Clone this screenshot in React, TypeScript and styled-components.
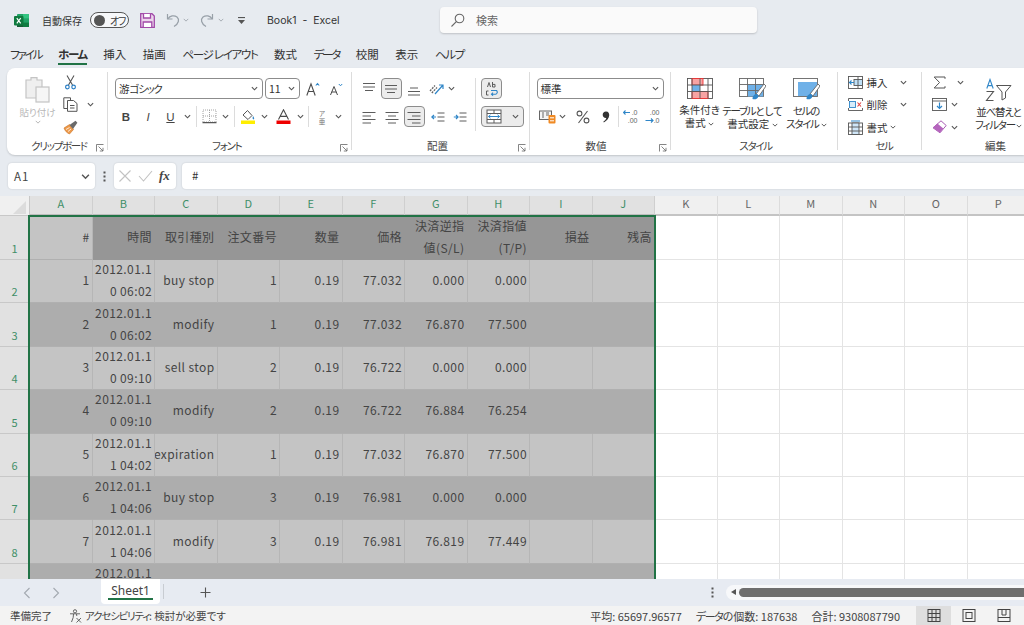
import React from 'react';
import styled, {createGlobalStyle} from 'styled-components';

const GREEN = '#217346';
const INK = '#444';

const GlobalStyle = createGlobalStyle`
	html, body {
		margin: 0;
		padding: 0;
		background: #e7ebf0;
	}
	* {
		box-sizing: border-box;
	}
	body {
		font-family: 'Noto Sans CJK JP', 'Noto Sans', sans-serif;
		color: #3a3a3a;
	}
`;

const COLUMNS = 'ABCDEFGHIJKLMNOP'.split('');
const SELECTED = 10;

const HEAD = ['#', '時間', '取引種別', '注文番号', '数量', '価格', '決済逆指\n値(S/L)', '決済指値\n(T/P)', '損益', '残高'];

const ROWS = [
	['1', '2012.01.1\n0 06:02', 'buy stop', '1', '0.19', '77.032', '0.000', '0.000'],
	['2', '2012.01.1\n0 06:02', 'modify', '1', '0.19', '77.032', '76.870', '77.500'],
	['3', '2012.01.1\n0 09:10', 'sell stop', '2', '0.19', '76.722', '0.000', '0.000'],
	['4', '2012.01.1\n0 09:10', 'modify', '2', '0.19', '76.722', '76.884', '76.254'],
	['5', '2012.01.1\n1 04:02', 'expiration', '1', '0.19', '77.032', '76.870', '77.500'],
	['6', '2012.01.1\n1 04:06', 'buy stop', '3', '0.19', '76.981', '0.000', '0.000'],
	['7', '2012.01.1\n1 04:06', 'modify', '3', '0.19', '76.981', '76.819', '77.449'],
	['', '2012.01.1\n\u00a0', '', '', '', '', '', ''],
];

const Chev = ({size = 7, color = '#555'}: {size?: number; color?: string}) => (
	<svg width={size} height={size} viewBox='0 0 8 8' fill='none' stroke={color} strokeWidth='1.3'>
		<path d='M1 2.5 L4 5.5 L7 2.5' />
	</svg>
);

const ExcelLogo = () => (
	<svg width='15' height='15' viewBox='0 0 15 15'>
		<rect x='3' y='1' width='12' height='13' rx='1' fill='#21a366' />
		<rect x='9' y='1' width='6' height='4.4' fill='#33c481' />
		<rect x='9' y='9.6' width='6' height='4.4' fill='#107c41' />
		<rect x='3' y='9.6' width='6' height='4.4' fill='#185c37' />
		<rect x='0' y='3' width='9.5' height='9.5' rx='1' fill='#0f7a3f' />
		<path d='M2.8 5.2 L6.7 10.3 M6.7 5.2 L2.8 10.3' stroke='#fff' strokeWidth='1.2' />
	</svg>
);

const SaveIcon = () => (
	<svg width='15' height='15' viewBox='0 0 15 15' fill='#ecd5ec' stroke='#a14aa8' strokeWidth='1.3'>
		<path d='M.7.7 H12 L14.3 3 V14.3 H.7 Z' />
		<path d='M3.5 .9 V5 H10.5 V.9' fill='#fff' />
		<path d='M3.2 14 V9 H11.8 V14' fill='#fff' />
	</svg>
);

const UndoIcon = ({flip}: {flip?: boolean}) => (
	<svg width='14' height='15' viewBox='0 0 14 15' fill='none' stroke='#98a0a8' strokeWidth='1.2' style={flip ? {transform: 'scaleX(-1)'} : undefined}>
		<path d='M1.5 1 V6 H6.5' />
		<path d='M1.8 5.8 C4 2.8 8 1.8 11 4 C13.6 6.3 13 10.6 8 13.5' />
	</svg>
);

const Customize = () => (
	<svg width='9' height='9' viewBox='0 0 9 9' fill='#555'>
		<rect x='1' y='1' width='7' height='1.1' />
		<path d='M1 4 H8 L4.5 8 Z' />
	</svg>
);

const SearchIcon = () => (
	<svg width='15' height='15' viewBox='0 0 15 15' fill='none' stroke='#666' strokeWidth='1.1'>
		<circle cx='9.5' cy='5.5' r='4.3' />
		<path d='M6.3 8.7 L1.5 13.5' />
	</svg>
);

const PasteIcon = () => (
	<svg width='25' height='27' viewBox='0 0 25 27' fill='#efefef' stroke='#c4c4c4' strokeWidth='1.2'>
		<path d='M1 4 H6 V1.6 H12 V4 H17 V22 H1 Z' />
		<rect x='11' y='11' width='13' height='15' fill='#f6f6f6' />
	</svg>
);

const ScissorsIcon = () => (
	<svg width='11' height='15' viewBox='0 0 11 15' fill='none'>
		<path d='M2 .5 L7.5 10 M9 .5 L3.5 10' stroke='#555' strokeWidth='1.1' />
		<circle cx='2.4' cy='12' r='1.8' stroke='#2c7fc4' strokeWidth='1.2' />
		<circle cx='8.6' cy='12' r='1.8' stroke='#2c7fc4' strokeWidth='1.2' />
	</svg>
);

const CopyIcon = () => (
	<svg width='15' height='15' viewBox='0 0 15 15' fill='#fff' stroke='#555' strokeWidth='1'>
		<path d='M.8 .8 H7.5 V11.5 H.8 Z' />
		<path d='M4.5 3.5 H10.5 L14 6.5 V14.3 H4.5 Z' />
		<path d='M7 8.5 H11.5 M7 11 H11.5' />
	</svg>
);

const BrushIcon = () => (
	<svg width='15' height='15' viewBox='0 0 15 15'>
		<path d='M1 8 L6.5 4.5 L10.5 9.5 L6.5 14 C4 13 2 11 1 8 Z' fill='#ed9a4b' stroke='#c96f1e' strokeWidth='.6' />
		<path d='M6.5 5 L12.5 .8 L14.4 2.8 L10 9' fill='#6a6a6a' />
		<path d='M3 9.5 L6.5 7.5 M5 11.5 L8 9' stroke='#fff' strokeWidth='.8' />
	</svg>
);

const Launcher = () => (
	<svg width='8' height='8' viewBox='0 0 8 8' fill='none' stroke='#666' strokeWidth='.8'>
		<path d='M.5 7.5 V.5 H7.5' />
		<path d='M2.5 2.5 L7 7 M7 3.8 V7 H3.8' />
	</svg>
);

const GrowFont = ({small}: {small?: boolean}) => (
	<svg width='14' height='14' viewBox='0 0 14 14' fill='none' stroke='#4a4a4a' strokeWidth={small ? 1 : 1.1}>
		<path d={small ? 'M1.5 13 L5 4.5 L8.5 13 M2.7 10 H7.3' : 'M.8 13.5 L5 1.8 L9.2 13.5 M2.2 9.5 H7.8'} />
		<path d={small ? 'M9.8 2 L11.5 3.8 L13.2 2' : 'M9.8 3.5 L11.5 1.5 L13.2 3.5'} stroke='#2f86c8' />
	</svg>
);

const BorderIcon = () => (
	<svg width='15' height='15' viewBox='0 0 15 15' fill='none' stroke='#9a9a9a' strokeWidth='.9' strokeDasharray='1 1'>
		<rect x='1' y='1' width='13' height='12' />
		<path d='M7.5 1 V13 M1 7 H14' />
		<path d='M.5 13.6 H14.5' stroke='#555' strokeDasharray='none' strokeWidth='1.1' />
	</svg>
);

const FillIcon = () => (
	<svg width='15' height='15' viewBox='0 0 15 15' fill='none'>
		<path d='M2 6 L6.5 1.5 L11 6.5 L7 10.5 Z' fill='#fff' stroke='#555' strokeWidth='1' />
		<path d='M12 7 C13.5 9 13.5 10.2 12.5 10.5 C11.3 10.2 11.5 8.6 12 7 Z' fill='#2f86c8' />
		<rect x='0' y='11.5' width='14' height='3.5' fill='#ffee00' />
	</svg>
);

const FontColorIcon = () => (
	<svg width='15' height='15' viewBox='0 0 15 15' fill='none'>
		<path d='M2.5 10.5 L7.5 .8 L12.5 10.5 M4.2 7.4 H10.8' stroke='#4a4a4a' strokeWidth='1.1' />
		<rect x='0.5' y='11.5' width='14' height='3.5' fill='#ee0000' />
	</svg>
);

const Lines = ({kind}: {kind: 'left' | 'center' | 'right' | 'top' | 'middle' | 'bottom'}) => {
	const paths = {
		left: 'M.5 2.5 H13.5 M.5 6 H9 M.5 9.5 H13.5 M.5 13 H9',
		center: 'M.5 2.5 H13.5 M3 6 H11 M.5 9.5 H13.5 M3 13 H11',
		right: 'M.5 2.5 H13.5 M5 6 H13.5 M.5 9.5 H13.5 M5 13 H13.5',
		top: 'M1 1.5 H13 M1 5 H13 M3 8.5 H11',
		middle: 'M1 3.5 H13 M1 7 H13 M3 10.5 H11',
		bottom: 'M3 6 H11 M1 9.5 H13 M1 13 H13',
	};
	return (
		<svg width='14' height='14' viewBox='0 0 14 14' fill='none' stroke='#5c5c5c' strokeWidth='1'>
			<path d={paths[kind]} />
		</svg>
	);
};

const IndentIcon = ({out}: {out?: boolean}) => (
	<svg width='14' height='14' viewBox='0 0 14 14' fill='none' stroke='#5c5c5c' strokeWidth='1'>
		<path d='M6.5 3 H13.5 M6.5 7 H13.5 M6.5 11 H13.5' />
		<path d={out ? 'M5 7 H.8 M3 5 L.8 7 L3 9' : 'M.8 7 H5 M3 5 L5 7 L3 9'} stroke='#2f86c8' strokeWidth='1.2' />
	</svg>
);

const OrientIcon = () => (
	<svg width='15' height='14' viewBox='0 0 15 14' fill='none'>
		<path d='M1 9 L6 3.5 M2.8 11 L8 5.5' stroke='#666' strokeWidth='1.3' strokeDasharray='2 1' />
		<path d='M6 12 L14 3 M10 3 H14 V7' stroke='#2f86c8' strokeWidth='1.2' />
	</svg>
);

const WrapIcon = () => (
	<svg width='14' height='15' viewBox='0 0 14 15' fill='none' stroke='#5c5c5c' strokeWidth='1'>
		<path d='M3.5 6 L5 1.5 L6.5 6 M8.5 1 V6 M8.5 3.4 H11 V6 H8.5' />
		<path d='M4.5 10 H2.5 V14 H4.5' />
		<path d='M7 9.5 H12.5 C14 11 13 13.2 11.5 13.2 H7.5 M9 11.7 L7.5 13.2 L9 14.7' stroke='#2f86c8' strokeWidth='1.1' />
	</svg>
);

const MergeIcon = () => (
	<svg width='16' height='15' viewBox='0 0 16 15' fill='none' stroke='#5c5c5c' strokeWidth='1'>
		<rect x='1' y='1' width='14' height='13' fill='#fff' />
		<path d='M1 4.5 H15 M1 10.5 H15 M8 1 V4.5 M8 10.5 V14' />
		<path d='M2.5 7.5 H13.5 M4.5 5.8 L2.5 7.5 L4.5 9.2 M11.5 5.8 L13.5 7.5 L11.5 9.2' stroke='#2f86c8' />
	</svg>
);

const AccountingIcon = () => (
	<svg width='17' height='14' viewBox='0 0 17 14' fill='none' stroke='#666' strokeWidth='1'>
		<rect x='.5' y='1' width='12' height='8.5' fill='#f4f4f4' />
		<path d='M3 3 H5 M3 5 H5 M3 7 H5 M7 3 H10 M7 5 H10' />
		<rect x='9.5' y='5' width='7' height='8.5' rx='1' fill='#f08a24' stroke='none' />
		<path d='M11 7.8 H15 M11 10.8 H15' stroke='#fff' />
	</svg>
);

const PercentIcon = () => (
	<svg width='14' height='14' viewBox='0 0 14 14' fill='none' stroke='#555' strokeWidth='1.1'>
		<circle cx='3.5' cy='3.5' r='2.4' />
		<circle cx='10.5' cy='10.5' r='2.4' />
		<path d='M11.5 1 L2.5 13' />
	</svg>
);

const CommaIcon = () => (
	<svg width='8' height='12' viewBox='0 0 8 12' fill='#333'>
		<path d='M4 .6 C6.5 .6 7.4 2.6 7.2 4.6 C7 7.4 4.8 10 1.8 11.4 L1.4 10.6 C3 9.6 4 8.4 4.3 7 C2 7.2 .7 5.6 .7 3.8 C.7 2 2 .6 4 .6 Z' />
	</svg>
);

const DecimalIcon = ({more}: {more?: boolean}) => (
	<svg width='15' height='15' viewBox='0 0 15 15' fill='none'>
		<g fill='#666' fontSize='7' fontFamily='Liberation Sans, sans-serif' textAnchor='end'>
			<text x='14.5' y='6'>{more ? '.00' : '.0'}</text>
			<text x='14.5' y='14'>{more ? '.0' : '.00'}</text>
		</g>
		<path d={more ? 'M.5 11.5 H8 M6 9.5 L8 11.5 L6 13.5' : 'M.5 3.5 H7 M2.5 1.5 L.5 3.5 L2.5 5.5'} stroke='#2f86c8' strokeWidth='1.1' />
	</svg>
);

const CondFormatIcon = () => (
	<svg width='26' height='21' viewBox='0 0 26 21' fill='#fff' stroke='#555' strokeWidth='.9'>
		<rect x='.5' y='.5' width='25' height='20' />
		<rect x='5' y='.5' width='11' height='6.6' fill='#f7a3a3' stroke='#e33' />
		<rect x='5' y='7' width='8' height='6.6' fill='#6fb1e8' stroke='none' />
		<rect x='5' y='13.5' width='16' height='7' fill='#f7a3a3' stroke='#e33' />
		<path d='M5 .5 V20.5 M13 .5 V20.5 M21 .5 V20.5 M.5 7 H25.5 M.5 13.5 H25.5' fill='none' />
	</svg>
);

const Paint = () => (
	<>
		<path d='M17 16 L25 6 L27 8 L20 18 Z' fill='#fff' stroke='#666' strokeWidth='.9' />
		<path d='M13.5 21 C13.5 18 15.5 15.5 18 16 C20 17 19.5 19.5 18 20.5 C16.5 21.5 15 21.5 13.5 21 Z' fill='#2f86c8' stroke='none' />
	</>
);

const TableFormatIcon = () => (
	<svg width='27' height='22' viewBox='0 0 27 22' fill='#fff' stroke='#666' strokeWidth='.9'>
		<rect x='.5' y='.5' width='24' height='18' />
		<rect x='9' y='6.5' width='15' height='12' fill='#6fb1e8' stroke='none' />
		<path d='M8.5 .5 V18.5 M16.5 .5 V18.5 M.5 6.5 H24.5 M.5 12.5 H24.5' fill='none' />
		<Paint />
	</svg>
);

const CellStyleIcon = () => (
	<svg width='27' height='22' viewBox='0 0 27 22' fill='#fff' stroke='#666' strokeWidth='.9'>
		<rect x='.5' y='.5' width='24' height='18' />
		<rect x='5' y='4' width='19' height='14' fill='#6fb1e8' stroke='none' />
		<Paint />
	</svg>
);

const InsertCellIcon = () => (
	<svg width='15' height='13' viewBox='0 0 15 13' fill='none' stroke='#555' strokeWidth='.9'>
		<rect x='.5' y='.5' width='14' height='12' />
		<rect x='6' y='3.5' width='8.5' height='6' fill='#bfe0f7' />
		<path d='M10 .5 V12.5' />
		<path d='M6 6.5 H1.5 M3.5 4.5 L1.5 6.5 L3.5 8.5' stroke='#2f86c8' strokeWidth='1.1' />
	</svg>
);

const DeleteCellIcon = () => (
	<svg width='15' height='13' viewBox='0 0 15 13' fill='none' stroke='#555' strokeWidth='.9'>
		<path d='M.5 .5 H14.5 M.5 12.5 H14.5 M.5 .5 V3 M14.5 .5 V3 M.5 10 V12.5 M14.5 10 V12.5' />
		<rect x='1.5' y='3.5' width='6' height='6' stroke='#2f86c8' fill='#d7ecfa' />
		<path d='M9.5 4.5 L13 8.5 M13 4.5 L9.5 8.5' stroke='#e04040' strokeWidth='1.1' />
	</svg>
);

const FormatCellIcon = () => (
	<svg width='15' height='15' viewBox='0 0 15 15' fill='none' stroke='#555' strokeWidth='.9'>
		<rect x='.5' y='3' width='14' height='11.5' />
		<rect x='4' y='3' width='7' height='11.5' fill='#cfe6f8' />
		<path d='M.5 7 H14.5 M.5 11 H14.5' />
		<path d='M3 1 H12' stroke='#2f86c8' strokeWidth='1.1' />
	</svg>
);

const SigmaIcon = () => (
	<svg width='13' height='13' viewBox='0 0 13 13' fill='none' stroke='#555' strokeWidth='1'>
		<path d='M12 2.8 V1 H1.2 L6.5 6.5 L1.2 12 H12 V10.2' />
	</svg>
);

const FillDownIcon = () => (
	<svg width='15' height='13' viewBox='0 0 15 13' fill='none' stroke='#555' strokeWidth='.9'>
		<rect x='.5' y='.5' width='14' height='12' />
		<path d='M.5 3 H14.5' />
		<path d='M7.5 4.5 V10.5 M5 8 L7.5 10.5 L10 8' stroke='#2f86c8' strokeWidth='1.2' />
	</svg>
);

const EraserIcon = () => (
	<svg width='15' height='14' viewBox='0 0 15 14'>
		<path d='M9 .8 L14.2 5.5 L8 12.8 L1 7.8 Z' fill='#fff' stroke='#a95cb4' strokeWidth='1' />
		<path d='M1 7.8 L5.4 3.5 L11.3 8.6 L8 12.8 Z' fill='#b565bd' />
	</svg>
);

const SortIcon = () => (
	<svg width='27' height='24' viewBox='0 0 27 24' fill='none'>
		<path d='M1.8 10.5 L5 1.5 L8.2 10.5 M3 7.6 H7' stroke='#2f86c8' strokeWidth='1.1' />
		<path d='M1.5 13.5 H8.5 L1.5 22.5 H8.5' stroke='#555' strokeWidth='1.1' />
		<path d='M11.5 7.5 H26 L20.5 14 V20 L17 22 V14 Z' stroke='#555' strokeWidth='1' />
	</svg>
);

const CloseIcon = () => (
	<svg width='14' height='14' viewBox='0 0 14 14' stroke='#c2c2c2' strokeWidth='1.1'>
		<path d='M1.5 1.5 L12.5 12.5 M12.5 1.5 L1.5 12.5' />
	</svg>
);

const CheckIcon = () => (
	<svg width='15' height='12' viewBox='0 0 15 12' fill='none' stroke='#c2c2c2' strokeWidth='1.1'>
		<path d='M1 6 L5.5 11 L14 1' />
	</svg>
);

const DotsIcon = ({color = '#555'}: {color?: string}) => (
	<svg width='3' height='11' viewBox='0 0 3 11' fill={color}>
		<rect x='.5' y='.5' width='2' height='2' />
		<rect x='.5' y='4.5' width='2' height='2' />
		<rect x='.5' y='8.5' width='2' height='2' />
	</svg>
);

const Nav = ({right}: {right?: boolean}) => (
	<svg width='8' height='12' viewBox='0 0 8 12' fill='none' stroke='#a3a9b0' strokeWidth='1.1'>
		<path d={right ? 'M1.5 1 L6.5 6 L1.5 11' : 'M6.5 1 L1.5 6 L6.5 11'} />
	</svg>
);

const PlusIcon = () => (
	<svg width='11' height='11' viewBox='0 0 11 11' stroke='#555' strokeWidth='1.1'>
		<path d='M5.5 .5 V10.5 M.5 5.5 H10.5' />
	</svg>
);

const A11yIcon = () => (
	<svg width='13' height='14' viewBox='0 0 13 14' fill='none' stroke='#555' strokeWidth='.9'>
		<circle cx='6' cy='2.3' r='1.6' />
		<path d='M1 4.8 H11 M4.5 5 L4.2 8.5 L2.5 13 M7.5 5 L7.8 7' />
		<path d='M7.5 9 L12 13.5 M12 9 L7.5 13.5' />
	</svg>
);

const ViewIcon = ({kind}: {kind: 'normal' | 'layout' | 'break'}) => (
	<svg width='14' height='13' viewBox='0 0 14 13' fill='none' stroke='#444' strokeWidth='1'>
		<rect x='1' y='.5' width='12' height='12' />
		{kind === 'normal' && <path d='M1 4.5 H13 M1 8.5 H13 M5 .5 V12.5 M9 .5 V12.5' />}
		{kind === 'layout' && <rect x='4' y='3.5' width='6' height='6' />}
		{kind === 'break' && <path d='M5 .5 V6 H9 V.5 M1 8.5 H13' />}
	</svg>
);

export default function App() {
	return (
		<>
			<GlobalStyle />
			<Window>
				<TitleBar>
					<TitleSlot $ml={14} $w={15}><ExcelLogo /></TitleSlot>
					<AutoSaveLabel>自動保存</AutoSaveLabel>
					<Toggle><Knob /><Kana>オフ</Kana></Toggle>
					<TitleSlot $ml={11} $w={15}><SaveIcon /></TitleSlot>
					<TitleSlot $ml={11} $w={14}><UndoIcon /></TitleSlot>
					<TitleSlot $ml={2} $w={8}><Chev size={6} color='#a5acb3' /></TitleSlot>
					<TitleSlot $ml={10} $w={14}><UndoIcon flip /></TitleSlot>
					<TitleSlot $ml={3} $w={8}><Chev size={6} color='#a5acb3' /></TitleSlot>
					<TitleSlot $ml={12} $w={9}><Customize /></TitleSlot>
					<DocTitle>Book1&nbsp; -&nbsp; Excel</DocTitle>
					<SearchBox><SearchIcon /><span>検索</span></SearchBox>
				</TitleBar>

				<TabRow>
					<Tab><Kana $tight>ファイル</Kana></Tab>
					<Tab $active><Kana>ホーム</Kana></Tab>
					<Tab>挿入</Tab>
					<Tab>描画</Tab>
					<Tab><Kana>ページ レイアウト</Kana></Tab>
					<Tab>数式</Tab>
					<Tab><Kana $tight>データ</Kana></Tab>
					<Tab>校閲</Tab>
					<Tab>表示</Tab>
					<Tab><Kana>ヘルプ</Kana></Tab>
				</TabRow>

				<Ribbon>
					<Group $w={101} $pl={12}>
						<GroupBody>
							<PasteBtn>
								<PasteIcon />
								<PasteLabel>貼り付け</PasteLabel>
								<Chev size={6} color='#b5b5b5' />
							</PasteBtn>
							<SmallStack $ml={6}>
								<SmallRow><IconCell $w={16}><ScissorsIcon /></IconCell></SmallRow>
								<SmallRow><IconCell $w={16}><CopyIcon /></IconCell><ChevCell $w={24}><Chev /></ChevCell></SmallRow>
								<SmallRow><IconCell $w={16}><BrushIcon /></IconCell></SmallRow>
							</SmallStack>
						</GroupBody>
						<GroupLabel $shift={8}><Kana>クリップボード</Kana></GroupLabel>
						<LauncherSlot><Launcher /></LauncherSlot>
					</Group>

					<Group $w={243.5} $pl={7}>
						<GroupBody>
							<TwoRows>
								<ToolRow>
									<SelectBox $w={148}><span>游<Kana>ゴシック</Kana></span><Chev /></SelectBox>
									<SelectBox $w={35} $ml={2}>11<Chev /></SelectBox>
									<IconCell $w={20} $ml={3}><GrowFont /></IconCell>
									<IconCell $w={20} $ml={3}><GrowFont small /></IconCell>
								</ToolRow>
								<ToolRow>
									<FaceBtn $w={22} $weight={700}>B</FaceBtn>
									<FaceBtn $w={22} $italic>I</FaceBtn>
									<FaceBtn $w={23} $under>U</FaceBtn>
									<ChevCell $w={11}><Chev /></ChevCell>
									<RowSep $mx={3} />
									<IconCell $w={19}><BorderIcon /></IconCell>
									<ChevCell $w={12}><Chev /></ChevCell>
									<RowSep $mx={3} />
									<IconCell $w={20}><FillIcon /></IconCell>
									<ChevCell $w={12}><Chev /></ChevCell>
									<IconCell $w={26}><FontColorIcon /></IconCell>
									<ChevCell $w={8}><Chev /></ChevCell>
									<RowSep $mx={4} />
									<Phonetic><span>ア</span><span>亜</span></Phonetic>
									<ChevCell $w={14}><Chev /></ChevCell>
								</ToolRow>
							</TwoRows>
						</GroupBody>
						<GroupLabel $shift={12}><Kana>フォント</Kana></GroupLabel>
						<LauncherSlot><Launcher /></LauncherSlot>
					</Group>

					<Group $w={178} $pl={7}>
						<GroupBody>
							<TwoRows>
								<ToolRow>
									<IconCell $w={21}><Lines kind='top' /></IconCell>
									<IconCell $w={21} $ml={1} $boxed><Lines kind='middle' /></IconCell>
									<IconCell $w={25}><Lines kind='bottom' /></IconCell>
									<IconCell $w={20}><OrientIcon /></IconCell>
									<ChevCell $w={10}><Chev /></ChevCell>
								</ToolRow>
								<ToolRow>
									<IconCell $w={21}><Lines kind='left' /></IconCell>
									<IconCell $w={24}><Lines kind='center' /></IconCell>
									<IconCell $w={21} $boxed><Lines kind='right' /></IconCell>
									<IconCell $w={27}><IndentIcon out /></IconCell>
									<IconCell $w={17}><IndentIcon /></IconCell>
								</ToolRow>
							</TwoRows>
							<ColumnSep $ml={6} />
							<TwoRows $ml={5}>
								<ToolRow><IconCell $w={21} $boxed><WrapIcon /></IconCell></ToolRow>
								<ToolRow>
									<IconCell $w={43} $boxed>
										<MergeIcon />
										<MergeChev><Chev /></MergeChev>
									</IconCell>
								</ToolRow>
							</TwoRows>
						</GroupBody>
						<GroupLabel $shift={12}>配置</GroupLabel>
						<LauncherSlot><Launcher /></LauncherSlot>
					</Group>

					<Group $w={141} $pl={7}>
						<GroupBody>
							<TwoRows>
								<ToolRow><SelectBox $w={127}>標準<Chev /></SelectBox></ToolRow>
								<ToolRow>
									<IconCell $w={22}><AccountingIcon /></IconCell>
									<ChevCell $w={8}><Chev /></ChevCell>
									<IconCell $w={22} $ml={5}><PercentIcon /></IconCell>
									<IconCell $w={20} $ml={2}><CommaIcon /></IconCell>
									<RowSep $mx={2} />
									<IconCell $w={20}><DecimalIcon /></IconCell>
									<IconCell $w={20} $ml={2}><DecimalIcon more /></IconCell>
								</ToolRow>
							</TwoRows>
						</GroupBody>
						<GroupLabel $shift={14}>数値</GroupLabel>
						<LauncherSlot><Launcher /></LauncherSlot>
					</Group>

					<Group $w={167} $pl={4}>
						<GroupBody>
							<BigBtn $w={50}><CondFormatIcon /><BigText>条件付き<br />書式 <Chev size={6} /></BigText></BigBtn>
							<BigBtn $w={56}><TableFormatIcon /><BigText><Kana>テーブル</Kana>として<br />書式設定 <Chev size={6} /></BigText></BigBtn>
							<BigBtn $w={52}><CellStyleIcon /><BigText><Kana>セル</Kana>の<br /><Kana>スタイル</Kana> <Chev size={6} /></BigText></BigBtn>
						</GroupBody>
						<GroupLabel><Kana>スタイル</Kana></GroupLabel>
					</Group>

					<Group $w={84} $pl={10}>
						<GroupBody>
							<SmallStack>
								<SmallRow><IconCell $w={15}><InsertCellIcon /></IconCell><CellText>挿入</CellText><ChevCell $w={30}><Chev /></ChevCell></SmallRow>
								<SmallRow><IconCell $w={15}><DeleteCellIcon /></IconCell><CellText>削除</CellText><ChevCell $w={30}><Chev /></ChevCell></SmallRow>
								<SmallRow><IconCell $w={15}><FormatCellIcon /></IconCell><CellText>書式</CellText><ChevCell $w={8}><Chev size={6} /></ChevCell></SmallRow>
							</SmallStack>
						</GroupBody>
						<GroupLabel><Kana>セル</Kana></GroupLabel>
					</Group>

					<Group $w={150} $pl={10} $last>
						<GroupBody>
							<SmallStack>
								<SmallRow><IconCell $w={16}><SigmaIcon /></IconCell><ChevCell $w={25}><Chev /></ChevCell></SmallRow>
								<SmallRow><IconCell $w={16}><FillDownIcon /></IconCell><ChevCell $w={13}><Chev /></ChevCell></SmallRow>
								<SmallRow><IconCell $w={16}><EraserIcon /></IconCell><ChevCell $w={13}><Chev /></ChevCell></SmallRow>
							</SmallStack>
							<BigBtn $w={50} $ml={1}><SortIcon /><SortText>並べ替えと<br />フィルター <Chev size={6} /></SortText></BigBtn>
						</GroupBody>
						<GroupLabel $edit>編集</GroupLabel>
					</Group>
				</Ribbon>

				<FormulaBar>
					<NameBox><span>A1</span><Chev size={9} /></NameBox>
					<FormulaDots><DotsIcon /></FormulaDots>
					<FxBox>
						<CloseIcon />
						<CheckIcon />
						<FxGlyph>fx</FxGlyph>
					</FxBox>
					<FormulaInput>#</FormulaInput>
				</FormulaBar>

				<SheetArea>
					<Grid>
						<Corner><CornerMark /></Corner>
						{COLUMNS.map((col, i) => (
							<ColHead key={col} $selected={i < SELECTED}>{col}</ColHead>
						))}

						<RowHead>1</RowHead>
						{COLUMNS.map((col, i) => (
							<Cell key={col} $tone={i === 0 ? 'light' : i < SELECTED ? 'head' : 'plain'}>
								{HEAD[i] ?? ''}
							</Cell>
						))}

						{ROWS.map((row, r) => (
							<React.Fragment key={r}>
								<RowHead>{r < ROWS.length - 1 ? r + 2 : ''}</RowHead>
								{COLUMNS.map((col, i) => (
									<Cell key={col} $tone={i >= SELECTED ? 'plain' : r % 2 === 0 ? 'light' : 'dark'}>
										{row[i] ?? ''}
									</Cell>
								))}
							</React.Fragment>
						))}
					</Grid>
					<Selection />
				</SheetArea>

				<SheetBar>
					<NavBtn $ml={23}><Nav /></NavBtn>
					<NavBtn $ml={21}><Nav right /></NavBtn>
					<SheetTab><SheetName>Sheet1</SheetName></SheetTab>
					<TabDivider />
					<AddSheet><PlusIcon /></AddSheet>
					<BarDots><DotsIcon /></BarDots>
					<ScrollTrack>
						<ScrollArrow />
						<ScrollThumb />
					</ScrollTrack>
				</SheetBar>

				<StatusBar>
					<StatusText>準備完了</StatusText>
					<A11y><A11yIcon /><span><StatusKana>アクセシビリティ</StatusKana>: 検討が必要です</span></A11y>
					<StatusStats>
						<span>平均: 65697.96577</span>
						<span><Kana>データ</Kana>の個数: 187638</span>
						<span>合計: 9308087790</span>
					</StatusStats>
					<ViewBtn $active><ViewIcon kind='normal' /></ViewBtn>
					<ViewBtn><ViewIcon kind='layout' /></ViewBtn>
					<ViewBtn><ViewIcon kind='break' /></ViewBtn>
				</StatusBar>
			</Window>
		</>
	);
}

const Window = styled.div`
	width: 1024px;
	height: 625px;
	display: flex;
	flex-direction: column;
	overflow: hidden;
	background: #e7ebf0;
`;

// katakana runs tighter in the original UI font than in the CJK fallback
const Kana = styled.span<{$tight?: boolean}>`
	letter-spacing: ${(p) => (p.$tight ? '-2.1px' : '-1.3px')};
`;

const StatusKana = styled.span`
	letter-spacing: -1.2px;
`;

const TitleBar = styled.div`
	height: 45px;
	flex: none;
	display: flex;
	align-items: center;
	padding-bottom: 5px;
	font-size: 11px;
`;

const TitleSlot = styled.div<{$ml: number; $w: number}>`
	flex: none;
	display: flex;
	align-items: center;
	justify-content: center;
	margin-left: ${(p) => p.$ml}px;
	width: ${(p) => p.$w}px;
`;

const AutoSaveLabel = styled.span`
	margin-left: 13px;
	width: 48px;
	flex: none;
	font-size: 10px;
	color: #333;
`;

const Toggle = styled.div`
	flex: none;
	width: 39px;
	height: 16px;
	border: 1px solid #555;
	border-radius: 8px;
	display: flex;
	align-items: center;
	padding-left: 3px;
	gap: 5px;
	font-size: 10px;
	font-feature-settings: 'palt';
	background: #f7f8fa;
`;

const Knob = styled.span`
	width: 11px;
	height: 11px;
	border-radius: 50%;
	background: #555;
	flex: none;
`;

const DocTitle = styled.span`
	margin-left: 21px;
	width: 173px;
	flex: none;
	font-family: 'Inter', 'Noto Sans', sans-serif;
	font-size: 10.5px;
	color: #333;
`;

const SearchBox = styled.div`
	flex: none;
	width: 317px;
	height: 26px;
	background: #fafafa;
	border-radius: 4px;
	box-shadow: 0 1px 2px rgba(0, 0, 0, 0.18);
	display: flex;
	align-items: center;
	gap: 11px;
	padding-left: 10px;
	font-size: 11px;
	color: #666;
`;

const TabRow = styled.div`
	height: 23px;
	flex: none;
	display: flex;
	gap: 16.5px;
	padding-left: 10px;
	font-size: 11.5px;
	font-feature-settings: 'palt';
`;

const Tab = styled.div<{$active?: boolean}>`
	height: 20px;
	line-height: 18px;
	color: #333;
	font-weight: ${(p) => (p.$active ? 700 : 400)};
	border-bottom: ${(p) => (p.$active ? `2px solid ${GREEN}` : 'none')};
`;

const Ribbon = styled.div`
	height: 87px;
	flex: none;
	margin-left: 7px;
	background: #fff;
	border-radius: 8px 0 0 8px;
	box-shadow: 0 1px 2px rgba(0, 0, 0, 0.16);
	display: flex;
	font-feature-settings: 'palt';
	font-size: 10.5px;
	overflow: hidden;
`;

const Group = styled.div<{$w: number; $pl: number; $last?: boolean}>`
	flex: none;
	position: relative;
	width: ${(p) => p.$w}px;
	margin: 4px 0 5px;
	padding: 6px 0 0 ${(p) => p.$pl}px;
	border-right: ${(p) => (p.$last ? 'none' : '1px solid #dcdcdc')};
	display: flex;
	flex-direction: column;
`;

const GroupBody = styled.div`
	flex: 1;
	display: flex;
	align-items: flex-start;
	min-height: 0;
`;

const GroupLabel = styled.div<{$shift?: number; $edit?: boolean}>`
	height: 17px;
	margin-bottom: -5px;
	line-height: 16px;
	font-size: 10.5px;
	color: #444;
	text-align: center;
	padding-right: ${(p) => p.$shift ?? 0}px;
	${(p) => (p.$edit ? 'margin-left: 36px; width: 56px;' : '')}
`;

const LauncherSlot = styled.div`
	position: absolute;
	right: 3px;
	bottom: -2px;
	line-height: 0;
`;

const PasteBtn = styled.div`
	width: 37px;
	flex: none;
	display: flex;
	flex-direction: column;
	align-items: center;
	margin-top: -2px;
`;

const PasteLabel = styled.div`
	margin-top: 2px;
	font-size: 9.5px;
	line-height: 14px;
	white-space: nowrap;
	color: #b8b8b8;
`;

const SmallStack = styled.div<{$ml?: number}>`
	margin-top: -7px;
	margin-left: ${(p) => p.$ml ?? 0}px;
	flex: none;
`;

const SmallRow = styled.div`
	height: 22.5px;
	display: flex;
	align-items: center;
`;

const CellText = styled.span`
	margin-left: 4px;
	width: 22px;
	font-size: 10.5px;
	color: #333;
	white-space: nowrap;
`;

const TwoRows = styled.div<{$ml?: number}>`
	flex: none;
	display: flex;
	flex-direction: column;
	gap: 7px;
	margin-left: ${(p) => p.$ml ?? 0}px;
`;

const ToolRow = styled.div`
	height: 21px;
	display: flex;
	align-items: center;
`;

const IconCell = styled.div<{$w: number; $ml?: number; $boxed?: boolean}>`
	flex: none;
	position: relative;
	width: ${(p) => p.$w}px;
	height: 21px;
	margin-left: ${(p) => p.$ml ?? 0}px;
	display: flex;
	align-items: center;
	justify-content: ${(p) => (p.$w > 40 ? 'flex-start' : 'center')};
	padding-left: ${(p) => (p.$w > 40 ? '4px' : 0)};
	border-radius: 4px;
	background: ${(p) => (p.$boxed ? '#ececec' : 'transparent')};
	border: ${(p) => (p.$boxed ? '1px solid #8c8c8c' : 'none')};
`;

const MergeChev = styled.span`
	margin-left: 10px;
	line-height: 0;
`;

const ChevCell = styled.div<{$w: number}>`
	flex: none;
	width: ${(p) => p.$w}px;
	display: flex;
	justify-content: center;
	align-items: center;
`;

const SelectBox = styled.div<{$w: number; $ml?: number}>`
	flex: none;
	width: ${(p) => p.$w}px;
	height: 21px;
	margin-left: ${(p) => p.$ml ?? 0}px;
	padding: 0 4px 0 3px;
	border: 1px solid #8c8c8c;
	border-radius: 4px;
	display: flex;
	align-items: center;
	justify-content: space-between;
	font-size: 10.5px;
	color: #333;
`;

const FaceBtn = styled.div<{$w: number; $weight?: number; $italic?: boolean; $under?: boolean}>`
	flex: none;
	width: ${(p) => p.$w}px;
	text-align: center;
	font-family: 'Liberation Sans', sans-serif;
	font-size: 11.5px;
	color: #444;
	font-weight: ${(p) => p.$weight ?? 400};
	font-style: ${(p) => (p.$italic ? 'italic' : 'normal')};
	text-decoration: ${(p) => (p.$under ? 'underline' : 'none')};
`;

const RowSep = styled.div<{$mx: number}>`
	flex: none;
	width: 1px;
	height: 21px;
	margin: 0 ${(p) => p.$mx}px;
	background: #dcdcdc;
`;

const ColumnSep = styled.div<{$ml: number}>`
	flex: none;
	width: 1px;
	height: 53px;
	margin-left: ${(p) => p.$ml}px;
	background: #dcdcdc;
`;

const Phonetic = styled.div`
	flex: none;
	width: 18px;
	text-align: center;
	font-size: 6.5px;
	color: #777;
	span {
		display: block;
		height: 8px;
		line-height: 8px;
	}
`;

const BigBtn = styled.div<{$w: number; $ml?: number}>`
	flex: none;
	width: ${(p) => p.$w}px;
	margin-left: ${(p) => p.$ml ?? 0}px;
	display: flex;
	flex-direction: column;
	align-items: center;
`;

const BigText = styled.div`
	margin-top: 4px;
	font-size: 10.5px;
	line-height: 13px;
	color: #333;
	text-align: center;
	white-space: nowrap;
`;

const SortText = styled(BigText)`
	margin-top: 3px;
	letter-spacing: -1.2px;
`;

const FormulaBar = styled.div`
	height: 41px;
	flex: none;
	display: flex;
	padding: 8px 0 7px 8px;
`;

const NameBox = styled.div`
	flex: none;
	width: 87px;
	background: #fff;
	border-radius: 4px;
	box-shadow: 0 0 2px rgba(0, 0, 0, 0.16);
	display: flex;
	align-items: center;
	justify-content: space-between;
	padding: 0 5px 0 6px;
	font-size: 11.5px;
	letter-spacing: 1px;
	color: #444;
`;

const FormulaDots = styled.div`
	flex: none;
	width: 19px;
	display: flex;
	align-items: center;
	justify-content: center;
`;

const FxBox = styled.div`
	flex: none;
	width: 62px;
	background: #fff;
	border-radius: 4px;
	box-shadow: 0 0 2px rgba(0, 0, 0, 0.16);
	display: flex;
	align-items: center;
	gap: 6px;
	padding-left: 4px;
`;

const FxGlyph = styled.span`
	font-family: 'Liberation Serif', serif;
	font-style: italic;
	font-weight: 700;
	font-size: 13px;
	color: #444;
`;

const FormulaInput = styled.div`
	flex: 1;
	margin-left: 6px;
	padding-left: 10px;
	background: #fff;
	box-shadow: 0 0 2px rgba(0, 0, 0, 0.16);
	border-radius: 4px 0 0 4px;
	font-size: 11.5px;
	line-height: 24px;
	color: #333;
`;

const SheetArea = styled.div`
	flex: 1;
	min-height: 0;
	position: relative;
	overflow: hidden;
	background: #fff;
`;

const Grid = styled.div`
	display: grid;
	grid-template-columns: 30px repeat(16, 62.5px);
	grid-template-rows: 20px 44px;
	grid-auto-rows: 43.4px;
`;

const Corner = styled.div`
	background: #f0f0f0;
	border-right: 1px solid #c8c8c8;
	border-bottom: 1px solid #c8c8c8;
	display: flex;
	align-items: flex-end;
	justify-content: flex-end;
	padding: 0 3px 1px 0;
`;

const CornerMark = styled.div`
	width: 0;
	height: 0;
	border-style: solid;
	border-width: 0 0 13px 13px;
	border-color: transparent transparent #dcdcdc transparent;
`;

const ColHead = styled.div<{$selected: boolean}>`
	background: ${(p) => (p.$selected ? '#e1e1e1' : '#f0f0f0')};
	color: ${(p) => (p.$selected ? '#3f8f68' : '#666')};
	border-right: 1px solid ${(p) => (p.$selected ? '#cfcfcf' : '#dcdcdc')};
	border-bottom: 2px solid ${(p) => (p.$selected ? '#bdbdbd' : '#c4c4c4')};
	font-size: 11px;
	line-height: 14px;
	text-align: center;
`;

const RowHead = styled.div`
	background: #e1e1e1;
	color: #3f8f68;
	border-right: 1px solid #c8c8c8;
	border-bottom: 1px solid #c8c8c8;
	display: flex;
	align-items: flex-end;
	justify-content: center;
	padding-bottom: 3px;
	font-size: 11px;
	line-height: 16px;
`;

const TONES = {
	plain: {bg: '#fff', side: '#e4e4e4', under: '#e4e4e4'},
	light: {bg: '#c4c4c4', side: '#b6b6b6', under: '#b0b0b0'},
	dark: {bg: '#adadad', side: '#adadad', under: '#b0b0b0'},
	head: {bg: '#969696', side: '#969696', under: '#969696'},
};

const Cell = styled.div<{$tone: keyof typeof TONES}>`
	background: ${(p) => TONES[p.$tone].bg};
	border-right: 1px solid ${(p) => TONES[p.$tone].side};
	border-bottom: 1px solid ${(p) => TONES[p.$tone].under};
	display: flex;
	align-items: center;
	justify-content: flex-end;
	padding: 0 2px 2px 0;
	font-size: 12px;
	letter-spacing: 0.4px;
	line-height: 22px;
	text-align: right;
	white-space: pre-line;
	color: ${INK};
	overflow: hidden;
`;

const Selection = styled.div`
	position: absolute;
	left: 28px;
	top: 19px;
	width: 628px;
	height: 500px;
	border: 2px solid ${GREEN};
	pointer-events: none;
`;

const SheetBar = styled.div`
	height: 27.5px;
	flex: none;
	display: flex;
	align-items: flex-start;
	background: #e7ebf2;
`;

const NavBtn = styled.div<{$ml: number}>`
	flex: none;
	width: 8px;
	margin-left: ${(p) => p.$ml}px;
	margin-top: 8px;
	line-height: 0;
`;

const SheetTab = styled.div`
	flex: none;
	width: 59px;
	height: 25px;
	margin-left: 41px;
	background: #fff;
	border-radius: 0 0 4px 4px;
	padding: 0 7px;
`;

const SheetName = styled.div`
	height: 21px;
	line-height: 23px;
	text-align: center;
	font-family: 'Noto Sans', sans-serif;
	font-size: 12px;
	color: #444;
	border-bottom: 2px solid ${GREEN};
`;

const TabDivider = styled.div`
	flex: none;
	width: 1px;
	height: 15px;
	margin: 5px 0 0 3px;
	background: #c8ccd2;
`;

const AddSheet = styled.div`
	flex: none;
	margin: 8px 0 0 36px;
	line-height: 0;
`;

const BarDots = styled.div`
	flex: none;
	margin: 8px 0 0 500px;
	line-height: 0;
`;

const ScrollTrack = styled.div`
	flex: none;
	width: 298px;
	height: 15px;
	margin: 6px 0 0 12px;
	background: #f7f8fa;
	border-radius: 8px 0 0 8px;
	display: flex;
	align-items: center;
	padding-left: 5px;
	gap: 3px;
`;

const ScrollArrow = styled.div`
	flex: none;
	width: 0;
	height: 0;
	border-style: solid;
	border-width: 3.5px 5px 3.5px 0;
	border-color: transparent #555 transparent transparent;
`;

const ScrollThumb = styled.div`
	flex: 1;
	height: 9px;
	border-radius: 4.5px 0 0 4.5px;
	background: #6e6e6e;
`;

const StatusBar = styled.div`
	height: 19px;
	flex: none;
	display: flex;
	align-items: center;
	background: #f3f3f3;
	padding: 0 3px 0 10px;
	font-size: 10.5px;
	color: #444;
	font-feature-settings: 'palt';
`;

const StatusText = styled.span`
	flex: none;
	width: 59px;
`;

const A11y = styled.div`
	flex: none;
	display: flex;
	align-items: center;
	gap: 3px;
`;

const StatusStats = styled.div`
	margin-left: auto;
	margin-right: 16px;
	display: flex;
	gap: 14px;
	font-size: 11px;
`;

const ViewBtn = styled.div<{$active?: boolean}>`
	flex: none;
	width: 35px;
	align-self: stretch;
	display: flex;
	align-items: center;
	justify-content: center;
	background: ${(p) => (p.$active ? '#dedede' : 'transparent')};
`;
